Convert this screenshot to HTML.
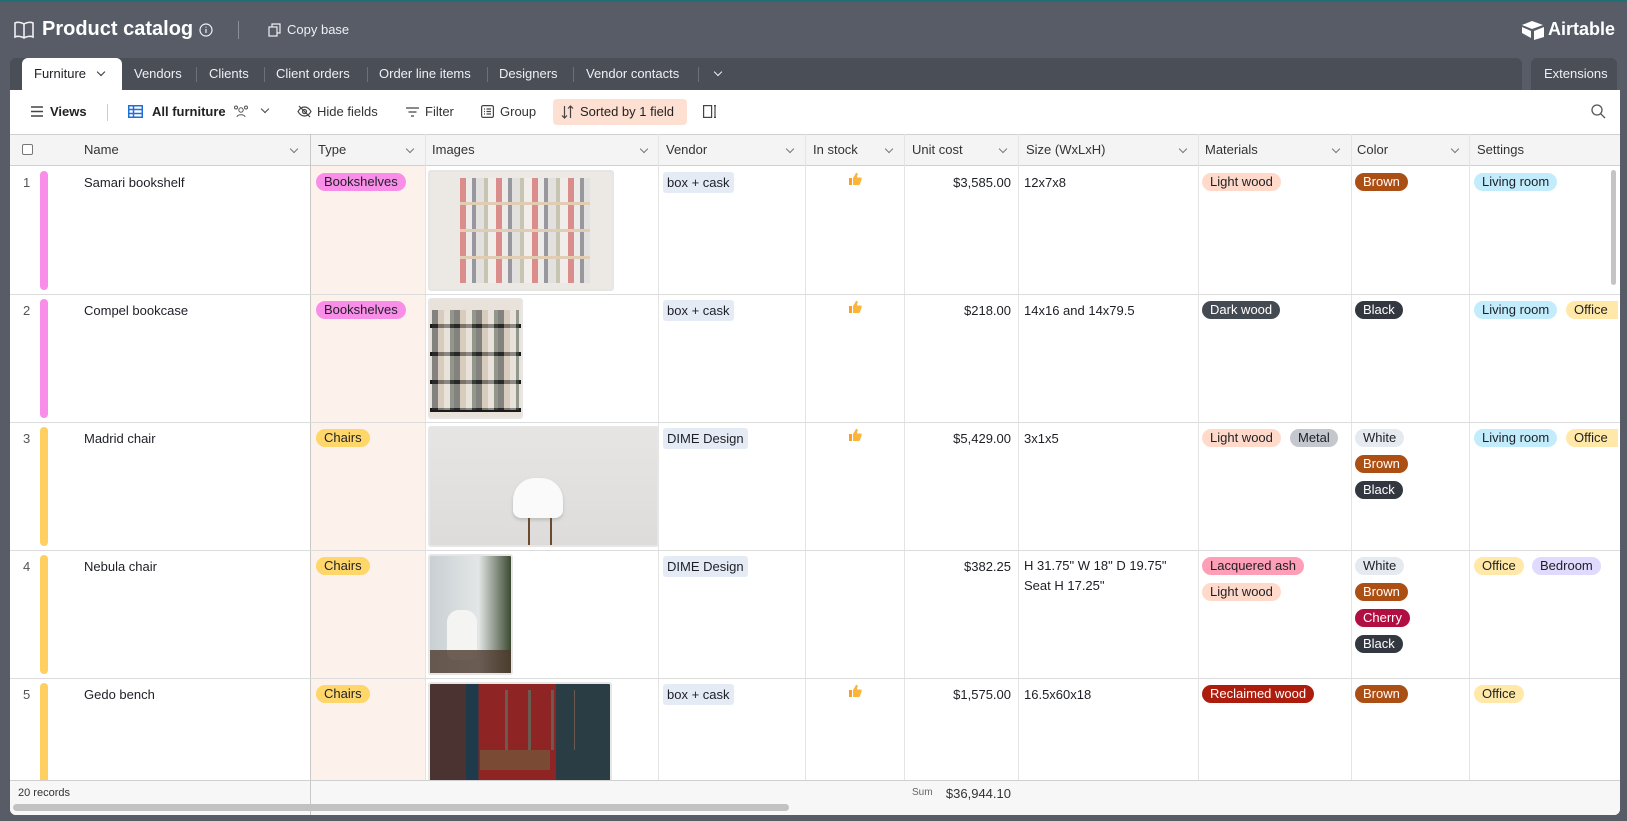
<!DOCTYPE html>
<html><head><meta charset="utf-8"><style>
*{box-sizing:border-box;margin:0;padding:0}
body{width:1627px;height:821px;background:#575c66;font-family:"Liberation Sans",sans-serif;font-size:13px;color:#1d1f25;position:relative;overflow:hidden}
.a{position:absolute}
.top{left:0;top:0;width:1627px;height:2px;background:#1f6f73}
.tabbar{left:10px;top:58px;width:1512px;height:32px;background:#4a4e57;border-radius:6px 6px 0 0}
.tab{top:58px;height:32px;line-height:32px;color:#eef0f3;font-size:13px}
.sep{top:67px;width:1px;height:15px;background:#6b707a}
.main{left:10px;top:90px;width:1610px;height:725px;background:#fff;border-radius:0 0 6px 6px}
.hdr{left:10px;top:134px;width:1610px;height:32px;background:#f4f4f4;border-top:1px solid #d0d0d0;border-bottom:1px solid #d0d0d0}
.ht{top:134px;height:32px;line-height:32px;font-size:13px;color:#333}
.vl{width:1px;background:#e4e4e4}
.hl{left:10px;width:1610px;height:1px;background:#dcdcdc}
.pill{position:absolute;height:18px;line-height:18px;padding:0 8px;border-radius:9px;font-size:13px;white-space:nowrap}
.tx{position:absolute;font-size:13px;white-space:nowrap}
.chev{position:absolute;width:6px;height:6px;border-right:1.2px solid #777;border-bottom:1.2px solid #777;transform:rotate(45deg)}
.bar{position:absolute;left:40px;width:8px;border-radius:4px}
.tb{top:99px;height:26px;line-height:26px;font-size:13px;color:#333}
.th{position:absolute;left:849px;width:13px;height:13px}
</style></head><body>
<svg width="0" height="0" style="position:absolute"><defs><symbol id="thumb" viewBox="0 0 13 13"><rect x="0" y="6" width="3" height="7" fill="#f7a21b"/><path d="M4 6 L7 1 C8.5 0.5 9 1.5 8.5 3 L8 5.5 H11.5 C12.5 5.5 13 6.5 12.5 7.5 L11 12 C10.7 12.7 10.2 13 9.5 13 H4Z" fill="#fcb43a"/></symbol></defs></svg>
<div class="a top"></div>
<svg class="a" style="left:14px;top:20px" width="20" height="19" viewBox="0 0 20 19" fill="none" stroke="#eef0f3" stroke-width="1.6"><path d="M10 4 C7 2,3 2,1 3 V17 C3 16,7 16,10 18 C13 16,17 16,19 17 V3 C17 2,13 2,10 4 Z M10 4 V18"/></svg>
<div class="tx" style="left:42px;top:18px;font-size:20px;font-weight:bold;color:#fff">Product catalog</div>
<svg class="a" style="left:199px;top:23px" width="14" height="14" viewBox="0 0 14 14" fill="none" stroke="#eef0f3" stroke-width="1.2"><circle cx="7" cy="7" r="6"/><path d="M7 6v4M7 3.8v.8"/></svg>
<div class="a" style="left:238px;top:21px;width:1px;height:18px;background:#8a8f98"></div>
<svg class="a" style="left:268px;top:23px" width="14" height="14" viewBox="0 0 14 14" fill="none" stroke="#eef0f3" stroke-width="1.2"><rect x="1" y="4" width="8" height="9"/><path d="M4 4V1h8v9H9"/></svg>
<div class="tx" style="left:287px;top:22px;color:#eef0f3;font-size:13px">Copy base</div>
<svg class="a" style="left:1521px;top:20px" width="24" height="20" viewBox="0 0 24 20"><path d="M11 1 L22 5 L11 9 L1 5Z" fill="#fff"/><path d="M13 11 L23 7 V17 L13 20Z" fill="#fff"/><path d="M1 7 L10 11 V18 L1 13Z" fill="#fff"/></svg>
<div class="tx" style="left:1548px;top:19px;font-size:18px;font-weight:bold;color:#fff">Airtable</div>
<div class="a tabbar"></div>
<div class="a" style="left:22px;top:58px;width:100px;height:33px;background:#fff;border-radius:6px 6px 0 0"></div>
<div class="a tab" style="left:34px;color:#1d1f25">Furniture</div>
<div class="chev" style="left:98px;top:69px;border-color:#333"></div>
<div class="a tab" style="left:134px">Vendors</div><div class="a sep" style="left:196px"></div>
<div class="a tab" style="left:209px">Clients</div><div class="a sep" style="left:264px"></div>
<div class="a tab" style="left:276px">Client orders</div><div class="a sep" style="left:367px"></div>
<div class="a tab" style="left:379px">Order line items</div><div class="a sep" style="left:487px"></div>
<div class="a tab" style="left:499px">Designers</div><div class="a sep" style="left:573px"></div>
<div class="a tab" style="left:586px">Vendor contacts</div><div class="a sep" style="left:698px"></div>
<div class="chev" style="left:715px;top:69px;border-color:#eef0f3"></div>
<div class="a" style="left:1531px;top:58px;width:86px;height:32px;background:#4a4e57;border-radius:6px 6px 0 0"></div>
<div class="a tab" style="left:1544px">Extensions</div>
<div class="a main"></div>
<svg class="a" style="left:31px;top:106px" width="12" height="11" viewBox="0 0 12 11" stroke="#444" stroke-width="1.4"><path d="M0 1h12M0 5.5h12M0 10h12"/></svg>
<div class="a tb" style="left:50px;font-weight:bold;color:#222">Views</div>
<div class="a" style="left:107px;top:104px;width:1px;height:17px;background:#ccc"></div>
<svg class="a" style="left:128px;top:105px" width="15" height="13" viewBox="0 0 15 13" fill="none" stroke="#1e6fd9" stroke-width="1.5"><rect x=".75" y=".75" width="13.5" height="11.5"/><path d="M.75 4.5h13.5M.75 8.5h13.5M5.5 .75v11.5"/></svg>
<div class="a tb" style="left:152px;font-weight:bold;color:#222">All furniture</div>
<svg class="a" style="left:233px;top:104px" width="16" height="15" viewBox="0 0 16 15" fill="none" stroke="#555" stroke-width="1"><circle cx="8" cy="6" r="2.2"/><path d="M4 13c0-3 8-3 8 0"/><circle cx="3" cy="3.5" r="1.5"/><circle cx="13" cy="3.5" r="1.5"/></svg>
<div class="chev" style="left:262px;top:106px;border-color:#444"></div>
<svg class="a" style="left:297px;top:105px" width="15" height="13" viewBox="0 0 15 13" fill="none" stroke="#444" stroke-width="1.2"><path d="M1 6.5C3 3 5 2 7.5 2S12 3 14 6.5C12 10 10 11 7.5 11S3 10 1 6.5Z"/><circle cx="7.5" cy="6.5" r="2"/><path d="M2 1l11 11"/></svg>
<div class="a tb" style="left:317px">Hide fields</div>
<svg class="a" style="left:406px;top:107px" width="13" height="10" viewBox="0 0 13 10" stroke="#444" stroke-width="1.3"><path d="M0 1h13M2.5 5h8M5 9h3"/></svg>
<div class="a tb" style="left:425px">Filter</div>
<svg class="a" style="left:481px;top:105px" width="13" height="13" viewBox="0 0 13 13" fill="none" stroke="#444" stroke-width="1.2"><rect x=".6" y=".6" width="11.8" height="11.8" rx="1.5"/><path d="M3 4h1M5.5 4h4.5M3 6.5h1M5.5 6.5h4.5M3 9h1M5.5 9h4.5"/></svg>
<div class="a tb" style="left:500px">Group</div>
<div class="a" style="left:553px;top:99px;width:134px;height:26px;background:#fde0d2;border-radius:4px"></div>
<svg class="a" style="left:561px;top:105px" width="13" height="14" viewBox="0 0 13 14" fill="none" stroke="#444" stroke-width="1.2"><path d="M3.5 1v12M1 10.5l2.5 2.5 2.5-2.5M9.5 13V1M7 3.5l2.5-2.5 2.5 2.5"/></svg>
<div class="a tb" style="left:580px;color:#222">Sorted by 1 field</div>
<svg class="a" style="left:703px;top:105px" width="14" height="13" viewBox="0 0 14 13" fill="none" stroke="#444" stroke-width="1.2"><rect x=".6" y=".6" width="8" height="11.8"/><path d="M12 1v11M11 .6h2M11 12.4h2"/></svg>
<svg class="a" style="left:1591px;top:104px" width="15" height="15" viewBox="0 0 15 15" fill="none" stroke="#555" stroke-width="1.3"><circle cx="6" cy="6" r="5"/><path d="M9.7 9.7L14 14"/></svg>
<div class="a" style="left:310px;top:134px;width:115px;height:647px;background:#fdf1ec"></div>
<div class="a hdr"></div>
<div class="a" style="left:22px;top:144px;width:11px;height:11px;border:1px solid #777;border-radius:2px;background:#fff"></div>
<div class="a ht" style="left:84px">Name</div><div class="chev" style="left:291px;top:146px"></div>
<div class="a ht" style="left:318px">Type</div><div class="chev" style="left:407px;top:146px"></div>
<div class="a ht" style="left:432px">Images</div><div class="chev" style="left:641px;top:146px"></div>
<div class="a ht" style="left:666px">Vendor</div><div class="chev" style="left:787px;top:146px"></div>
<div class="a ht" style="left:813px">In stock</div><div class="chev" style="left:886px;top:146px"></div>
<div class="a ht" style="left:912px">Unit cost</div><div class="chev" style="left:1000px;top:146px"></div>
<div class="a ht" style="left:1026px">Size (WxLxH)</div><div class="chev" style="left:1180px;top:146px"></div>
<div class="a ht" style="left:1205px">Materials</div><div class="chev" style="left:1333px;top:146px"></div>
<div class="a ht" style="left:1357px">Color</div><div class="chev" style="left:1452px;top:146px"></div>
<div class="a ht" style="left:1477px">Settings</div>
<div class="a" style="left:310px;top:134px;width:1px;height:681px;background:#c8c8c8"></div>
<div class="a vl" style="left:425px;top:134px;height:647px"></div>
<div class="a vl" style="left:658px;top:134px;height:647px"></div>
<div class="a vl" style="left:805px;top:134px;height:647px"></div>
<div class="a vl" style="left:904px;top:134px;height:647px"></div>
<div class="a vl" style="left:1018px;top:134px;height:647px"></div>
<div class="a vl" style="left:1198px;top:134px;height:647px"></div>
<div class="a vl" style="left:1351px;top:134px;height:647px"></div>
<div class="a vl" style="left:1469px;top:134px;height:647px"></div>
<div class="a hl" style="top:294px"></div><div class="a hl" style="top:422px"></div><div class="a hl" style="top:550px"></div><div class="a hl" style="top:678px"></div>
<!-- Row 1 -->
<div class="tx" style="left:23px;top:175px;color:#555">1</div>
<div class="bar" style="top:171px;height:119px;background:#f98ee9"></div>
<div class="tx" style="left:84px;top:175px">Samari bookshelf</div>
<div class="pill" style="left:316px;top:173px;background:#f98ee9">Bookshelves</div>
<div class="a" style="left:428px;top:170px;width:186px;height:121px;border:2px solid #e6e6e6;border-radius:3px;background:#ece8e4"></div>
<div class="a" style="left:460px;top:178px;width:130px;height:105px;background:repeating-linear-gradient(180deg,transparent 0 24px,#d7b88c 24px 27px),repeating-linear-gradient(90deg,#c44 0 6px,#eee 6px 12px,#556 12px 16px,#ddd 16px 24px,#aa8 24px 28px,#f4f2ef 28px 36px);opacity:.55"></div>
<div class="pill" style="left:663px;top:172px;background:#e5ebf5;border-radius:3px;padding:0 4px;height:21px;line-height:21px">box + cask</div>
<svg class="th" style="top:172px"><use href="#thumb"/></svg>
<div class="tx" style="right:616px;top:175px">$3,585.00</div>
<div class="tx" style="left:1024px;top:175px">12x7x8</div>
<div class="pill" style="left:1202px;top:173px;background:#ffdacb">Light wood</div>
<div class="pill" style="left:1355px;top:173px;background:#ac4f14;color:#fff">Brown</div>
<div class="pill" style="left:1474px;top:173px;background:#c2ecfb">Living room</div>
<!-- Row 2 -->
<div class="tx" style="left:23px;top:303px;color:#555">2</div>
<div class="bar" style="top:299px;height:119px;background:#f98ee9"></div>
<div class="tx" style="left:84px;top:303px">Compel bookcase</div>
<div class="pill" style="left:316px;top:301px;background:#f98ee9">Bookshelves</div>
<div class="a" style="left:428px;top:298px;width:95px;height:121px;border:2px solid #e6e6e6;border-radius:3px;background:repeating-linear-gradient(180deg,#e8e2da 0 24px,#1b1b1b 24px 28px)"></div>
<div class="a" style="left:432px;top:310px;width:87px;height:100px;background:repeating-linear-gradient(90deg,#333 0 6px,#c9b9a6 6px 12px,#e9e3dc 12px 18px,#4a5a48 18px 22px);opacity:.55"></div>
<div class="pill" style="left:663px;top:300px;background:#e5ebf5;border-radius:3px;padding:0 4px;height:21px;line-height:21px">box + cask</div>
<svg class="th" style="top:300px"><use href="#thumb"/></svg>
<div class="tx" style="right:616px;top:303px">$218.00</div>
<div class="tx" style="left:1024px;top:303px">14x16 and 14x79.5</div>
<div class="pill" style="left:1202px;top:301px;background:#444a52;color:#fff">Dark wood</div>
<div class="pill" style="left:1355px;top:301px;background:#333840;color:#fff">Black</div>
<div class="pill" style="left:1474px;top:301px;background:#c2ecfb">Living room</div>
<div class="pill" style="left:1566px;top:301px;background:#ffe8a8;width:52px;overflow:hidden;border-radius:9px 0 0 9px">Office</div>
<!-- Row 3 -->
<div class="tx" style="left:23px;top:431px;color:#555">3</div>
<div class="bar" style="top:427px;height:119px;background:#ffcf60"></div>
<div class="tx" style="left:84px;top:431px">Madrid chair</div>
<div class="pill" style="left:316px;top:429px;background:#ffd66a">Chairs</div>
<div class="a" style="left:428px;top:426px;width:231px;height:121px;border:2px solid #e6e6e6;border-radius:3px;background:linear-gradient(#e7e5e3,#dedcda)"></div>
<div class="a" style="left:513px;top:478px;width:50px;height:40px;background:#fafafa;border-radius:22px 22px 8px 8px;box-shadow:0 2px 3px #bbb"></div>
<div class="a" style="left:528px;top:518px;width:24px;height:27px;border-left:2px solid #6b4a2e;border-right:2px solid #6b4a2e"></div>
<div class="pill" style="left:663px;top:428px;background:#e5ebf5;border-radius:3px;padding:0 4px;height:21px;line-height:21px">DIME Design</div>
<svg class="th" style="top:428px"><use href="#thumb"/></svg>
<div class="tx" style="right:616px;top:431px">$5,429.00</div>
<div class="tx" style="left:1024px;top:431px">3x1x5</div>
<div class="pill" style="left:1202px;top:429px;background:#ffdacb">Light wood</div>
<div class="pill" style="left:1290px;top:429px;background:#c4c7cd">Metal</div>
<div class="pill" style="left:1355px;top:429px;background:#e5e9f0">White</div>
<div class="pill" style="left:1355px;top:455px;background:#ac4f14;color:#fff">Brown</div>
<div class="pill" style="left:1355px;top:481px;background:#333840;color:#fff">Black</div>
<div class="pill" style="left:1474px;top:429px;background:#c2ecfb">Living room</div>
<div class="pill" style="left:1566px;top:429px;background:#ffe8a8;width:52px;overflow:hidden;border-radius:9px 0 0 9px">Office</div>
<!-- Row 4 -->
<div class="tx" style="left:23px;top:559px;color:#555">4</div>
<div class="bar" style="top:555px;height:119px;background:#ffcf60"></div>
<div class="tx" style="left:84px;top:559px">Nebula chair</div>
<div class="pill" style="left:316px;top:557px;background:#ffd66a">Chairs</div>
<div class="a" style="left:428px;top:554px;width:85px;height:121px;border:2px solid #e6e6e6;border-radius:3px;background:linear-gradient(90deg,#c9d0d3,#e3e6e6 60%,#3c4a32)"></div>
<div class="a" style="left:447px;top:610px;width:30px;height:50px;background:#f4f4f2;border-radius:12px 12px 8px 8px"></div>
<div class="a" style="left:430px;top:650px;width:81px;height:23px;background:#4c3a2d;opacity:.8"></div>
<div class="pill" style="left:663px;top:556px;background:#e5ebf5;border-radius:3px;padding:0 4px;height:21px;line-height:21px">DIME Design</div>
<div class="tx" style="right:616px;top:559px">$382.25</div>
<div class="tx" style="left:1024px;line-height:20px;top:556px">H 31.75" W 18" D 19.75"<br>Seat H 17.25"</div>
<div class="pill" style="left:1202px;top:557px;background:#ff9eb7">Lacquered ash</div>
<div class="pill" style="left:1202px;top:583px;background:#ffdacb">Light wood</div>
<div class="pill" style="left:1355px;top:557px;background:#e5e9f0">White</div>
<div class="pill" style="left:1355px;top:583px;background:#ac4f14;color:#fff">Brown</div>
<div class="pill" style="left:1355px;top:609px;background:#b10f41;color:#fff">Cherry</div>
<div class="pill" style="left:1355px;top:635px;background:#333840;color:#fff">Black</div>
<div class="pill" style="left:1474px;top:557px;background:#ffe8a8">Office</div>
<div class="pill" style="left:1532px;top:557px;background:#e0dafd">Bedroom</div>
<!-- Row 5 -->
<div class="tx" style="left:23px;top:687px;color:#555">5</div>
<div class="bar" style="top:683px;height:98px;background:#ffcf60;border-radius:4px 4px 0 0"></div>
<div class="tx" style="left:84px;top:687px">Gedo bench</div>
<div class="pill" style="left:316px;top:685px;background:#ffd66a">Chairs</div>
<div class="a" style="left:428px;top:682px;width:184px;height:99px;border:2px solid #e6e6e6;border-bottom:0;border-radius:3px 3px 0 0;background:linear-gradient(90deg,#4a3330 0 20%,#1f3a4a 20% 27%,#8e2424 27% 70%,#2a3d45 70%)"></div>
<div class="a" style="left:485px;top:690px;width:90px;height:60px;background:repeating-linear-gradient(90deg,transparent 0 20px,#6a5a50 20px 23px)"></div>
<div class="a" style="left:480px;top:750px;width:70px;height:20px;background:#7a4a35"></div>
<div class="pill" style="left:663px;top:684px;background:#e5ebf5;border-radius:3px;padding:0 4px;height:21px;line-height:21px">box + cask</div>
<svg class="th" style="top:684px"><use href="#thumb"/></svg>
<div class="tx" style="right:616px;top:687px">$1,575.00</div>
<div class="tx" style="left:1024px;top:687px">16.5x60x18</div>
<div class="pill" style="left:1202px;top:685px;background:#ad1d0d;color:#fff">Reclaimed wood</div>
<div class="pill" style="left:1355px;top:685px;background:#ac4f14;color:#fff">Brown</div>
<div class="pill" style="left:1474px;top:685px;background:#ffe8a8">Office</div>
<div class="a" style="left:1611px;top:170px;width:5px;height:115px;background:#c4c4c4;border-radius:3px"></div>
<div class="a" style="left:10px;top:780px;width:1610px;height:35px;background:#f7f7f7;border-top:1px solid #d0d0d0;border-radius:0 0 6px 6px"></div>
<div class="a" style="left:310px;top:781px;width:1px;height:34px;background:#c8c8c8"></div>
<div class="tx" style="left:18px;top:787px;font-size:11px;color:#333">20 records</div>
<div class="tx" style="left:912px;top:787px;font-size:10px;color:#666">Sum</div>
<div class="tx" style="right:616px;top:786px;color:#333">$36,944.10</div>
<div class="a" style="left:13px;top:804px;width:776px;height:7px;background:#c2c2c2;border-radius:4px"></div>
</body></html>
